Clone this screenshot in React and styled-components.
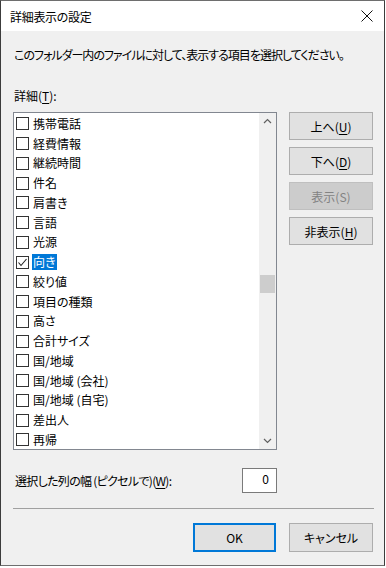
import React from 'react';
import styled, { createGlobalStyle } from 'styled-components';

const GlobalStyle = createGlobalStyle`
  html, body {
    margin: 0;
    padding: 0;
    background: #ffffff;
  }
  body {
    font-family: "Noto Sans CJK JP", "Noto Sans", sans-serif;
    font-size: 12px;
    color: #000;
    font-feature-settings: "palt";
  }
`;

const Janela = styled.div`
  box-sizing: border-box;
  width: 385px;
  height: 566px;
  border: 1px solid #6e6e6e;
  border-left-color: #3c3c3c;
  border-right-color: #3c3c3c;
  background: #f0f0f0;
  display: flex;
  flex-direction: column;
`;

const BarraTitulo = styled.div`
  height: 30px;
  background: #ffffff;
  display: flex;
  align-items: center;
  justify-content: space-between;
  padding: 0 10px 0 9px;
  font-size: 12px;
  letter-spacing: -0.3px;
`;

const Fechar = styled.svg`
  width: 12px;
  height: 12px;
  margin-right: 1px;
`;

const Corpo = styled.div`
  flex: 1;
  display: flex;
  flex-direction: column;
  padding: 0 11px 0 12px;
`;

const Descricao = styled.div`
  margin-top: 16px;
  line-height: 16px;
  padding-left: 1px;
  white-space: nowrap;
  letter-spacing: -1px;
`;

const Rotulo = styled.div`
  margin-top: 25px;
  line-height: 16px;
  padding-left: 1px;
`;

const Sublinhado = styled.span`
  text-decoration: underline;
  text-underline-offset: 2px;
`;

const LinhaLista = styled.div`
  margin-top: 8px;
  display: flex;
  gap: 12px;
  align-items: flex-start;
`;

const Lista = styled.div`
  box-sizing: border-box;
  width: 264px;
  height: 338px;
  border: 1px solid #828790;
  background: #ffffff;
  display: flex;
  overflow: hidden;
`;

const Itens = styled.div`
  flex: 1;
  padding-top: 1px;
`;

const Item = styled.div`
  height: 19.75px;
  display: flex;
  align-items: center;
  padding-left: 2px;
  gap: 3px;
`;

const Caixa = styled.span`
  box-sizing: border-box;
  width: 13px;
  height: 13px;
  border: 1px solid #333333;
  background: #ffffff;
  display: flex;
  align-items: center;
  justify-content: center;
`;

const Texto = styled.span`
  line-height: 16px;
  padding: 0 1px;
  background: ${p => (p.$selecionado ? '#0078d7' : 'transparent')};
  color: ${p => (p.$selecionado ? '#ffffff' : '#000000')};
`;

const Rolagem = styled.div`
  width: 17px;
  background: #f0f0f0;
  display: flex;
  flex-direction: column;
  align-items: center;
`;

const Seta = styled.svg`
  width: 17px;
  height: 17px;
  flex: none;
`;

const Trilho = styled.div`
  flex: 1;
  width: 100%;
  display: flex;
  flex-direction: column;
  align-items: center;
`;

const Polegar = styled.div`
  width: 15px;
  height: 18px;
  margin-top: 145px;
  background: #cdcdcd;
`;

const ColunaBotoes = styled.div`
  display: flex;
  flex-direction: column;
  gap: 7px;
`;

const Botao = styled.button`
  box-sizing: border-box;
  width: ${p => p.$largura || 84}px;
  height: ${p => p.$altura || 28}px;
  font-family: inherit;
  font-size: 12px;
  font-feature-settings: "palt";
  background: ${p => (p.disabled ? '#cccccc' : '#e1e1e1')};
  color: ${p => (p.disabled ? '#838383' : '#000000')};
  border: 1px solid ${p => (p.$padrao ? '#0078d7' : p.disabled ? '#bfbfbf' : '#adadad')};
  box-shadow: ${p => (p.$padrao ? 'inset 0 0 0 1px #0078d7' : 'none')};
  padding: 0;
  margin: 0;
  cursor: default;
`;

const LinhaLargura = styled.div`
  margin-top: 18px;
  width: 264px;
  display: flex;
  align-items: center;
  justify-content: space-between;
`;

const RotuloLargura = styled.span`
  padding-left: 2px;
  line-height: 16px;
  white-space: pre;
  letter-spacing: -0.7px;
`;

const Campo = styled.div`
  box-sizing: border-box;
  width: 35px;
  height: 25px;
  border: 1px solid #7a7a7a;
  background: #ffffff;
  display: flex;
  align-items: center;
  justify-content: flex-end;
  padding-right: 7px;
  padding-bottom: 4px;
`;

const Separador = styled.div`
  margin: 15px 0 0 0;
  height: 1px;
  width: 361px;
  background: #a0a0a0;
`;

const Rodape = styled.div`
  margin-top: 14px;
  display: flex;
  justify-content: flex-end;
  gap: 13px;
`;

const itens = [
  '携帯電話', '経費情報', '継続時間', '件名', '肩書き', '言語', '光源', '向き',
  '絞り値', '項目の種類', '高さ', '合計サイズ', '国/地域', '国/地域 (会社)',
  '国/地域 (自宅)', '差出人', '再帰',
];

function DetalhesDialogo() {
  return (
    <Janela>
      <BarraTitulo>
        <span>詳細表示の設定</span>
        <Fechar viewBox="0 0 12 12">
          <path d="M0.5 0.5 L11.5 11.5 M11.5 0.5 L0.5 11.5" stroke="#111" strokeWidth="1" fill="none" />
        </Fechar>
      </BarraTitulo>
      <Corpo>
        <Descricao>このフォルダー内のファイルに対して、表示する項目を選択してください。</Descricao>
        <Rotulo>詳細(<Sublinhado>T</Sublinhado>):</Rotulo>
        <LinhaLista>
          <Lista>
            <Itens>
              {itens.map(nome => {
                const sel = nome === '向き';
                return (
                  <Item key={nome}>
                    <Caixa>
                      {sel && (
                        <svg width="11" height="11" viewBox="0 0 11 11">
                          <path d="M1.5 5.5 L4 8.5 L9.5 2" stroke="#222" strokeWidth="1.1" fill="none" />
                        </svg>
                      )}
                    </Caixa>
                    <Texto $selecionado={sel}>{nome}</Texto>
                  </Item>
                );
              })}
            </Itens>
            <Rolagem>
              <Seta viewBox="0 0 17 17">
                <path d="M5 10 L8.5 6.5 L12 10" stroke="#606060" strokeWidth="1.2" fill="none" />
              </Seta>
              <Trilho>
                <Polegar />
              </Trilho>
              <Seta viewBox="0 0 17 17">
                <path d="M5 7 L8.5 10.5 L12 7" stroke="#606060" strokeWidth="1.2" fill="none" />
              </Seta>
            </Rolagem>
          </Lista>
          <ColunaBotoes>
            <Botao>上へ(<Sublinhado>U</Sublinhado>)</Botao>
            <Botao>下へ(<Sublinhado>D</Sublinhado>)</Botao>
            <Botao disabled>表示(S)</Botao>
            <Botao>非表示(<Sublinhado>H</Sublinhado>)</Botao>
          </ColunaBotoes>
        </LinhaLista>
        <LinhaLargura>
          <RotuloLargura>選択した列の幅 (ピクセルで)(<Sublinhado>W</Sublinhado>):</RotuloLargura>
          <Campo>0</Campo>
        </LinhaLargura>
        <Separador />
        <Rodape>
          <Botao $padrao $largura={83} $altura={29}>OK</Botao>
          <Botao $largura={84} $altura={29}>キャンセル</Botao>
        </Rodape>
      </Corpo>
    </Janela>
  );
}

export default function App() {
  return (
    <>
      <GlobalStyle />
      <DetalhesDialogo />
    </>
  );
}
